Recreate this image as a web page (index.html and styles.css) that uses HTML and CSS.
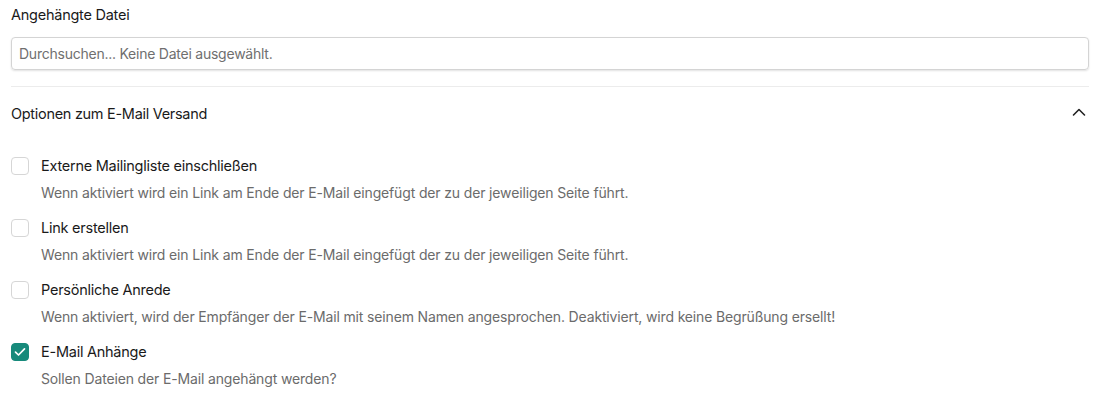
FILE: index.html
```html
<!DOCTYPE html>
<html lang="de">
<head>
<meta charset="utf-8">
<link rel="stylesheet" href="styles.css">
</head>
<body>
<div class="page">
  <div class="field">
    <label class="field-label">Angehängte Datei</label>
    <div class="file-input">Durchsuchen... Keine Datei ausgewählt.</div>
  </div>
  <hr class="divider">
  <div class="section-head">
    <span class="section-title">Optionen zum E-Mail Versand</span>
    <svg class="chevron" width="14" height="10" viewBox="0 0 14 10"><path d="M1.5 8 L7 2.5 L12.5 8" fill="none" stroke="#222" stroke-width="1.6" stroke-linecap="round" stroke-linejoin="round"/></svg>
  </div>
  <div class="options">
    <div class="option">
      <span class="box"></span>
      <div class="opt-text">
        <div class="opt-label">Externe Mailingliste einschließen</div>
        <div class="opt-desc">Wenn aktiviert wird ein Link am Ende der E-Mail eingefügt der zu der jeweiligen Seite führt.</div>
      </div>
    </div>
    <div class="option">
      <span class="box"></span>
      <div class="opt-text">
        <div class="opt-label">Link erstellen</div>
        <div class="opt-desc">Wenn aktiviert wird ein Link am Ende der E-Mail eingefügt der zu der jeweiligen Seite führt.</div>
      </div>
    </div>
    <div class="option">
      <span class="box"></span>
      <div class="opt-text">
        <div class="opt-label">Persönliche Anrede</div>
        <div class="opt-desc">Wenn aktiviert, wird der Empfänger der E-Mail mit seinem Namen angesprochen. Deaktiviert, wird keine Begrüßung ersellt!</div>
      </div>
    </div>
    <div class="option">
      <span class="box checked"><svg width="12" height="10" viewBox="0 0 12 10"><path d="M1.5 5.2 L4.5 8 L10.5 1.8" fill="none" stroke="#fff" stroke-width="1.7" stroke-linecap="round" stroke-linejoin="round"/></svg></span>
      <div class="opt-text">
        <div class="opt-label">E-Mail Anhänge</div>
        <div class="opt-desc">Sollen Dateien der E-Mail angehängt werden?</div>
      </div>
    </div>
  </div>
</div>
</body>
</html>
```
FILE: styles.css
```css
html, body { margin: 0; padding: 0; background: #fff; }
body { font-family: Inter, "Noto Sans", sans-serif; color: #1a1a1a; }
.page { width: 1078px; padding: 0 0 0 11px; }
.field { padding-top: 5px; }
.field-label { display: block; font-size: 14.5px; letter-spacing: -0.25px; line-height: 20px; margin-bottom: 12px; }
.file-input {
  height: 31px; border: 1px solid #d4d4d4; border-radius: 4px;
  box-shadow: 0 1px 2px rgba(0,0,0,0.12);
  font-size: 14px; letter-spacing: -0.24px; line-height: 31px; padding-left: 7px; color: #6f6f6f;
}
.divider { border: 0; border-top: 1px solid #ececec; margin: 16px 0 0 0; }
.section-head { display: flex; align-items: center; justify-content: space-between; height: 52px; }
.section-title { font-size: 14.5px; letter-spacing: -0.3px; }
.chevron { margin-right: 3px; margin-top: -2px; }
.options { padding-top: 14px; display: flex; flex-direction: column; gap: 8px; }
.option { display: flex; align-items: flex-start; }
.box {
  width: 16px; height: 16px; border: 1px solid #d6d6d6; border-radius: 4px;
  flex: none; margin-top: 4px; margin-right: 12px; box-sizing: content-box;
  display: flex; align-items: center; justify-content: center;
}
.box.checked { background: #178a7b; border-color: #178a7b; }
.opt-label { font-size: 14.5px; letter-spacing: -0.25px; line-height: 26px; }
.opt-desc { font-size: 14px; letter-spacing: -0.15px; line-height: 28px; color: #6b6b6b; }
```
